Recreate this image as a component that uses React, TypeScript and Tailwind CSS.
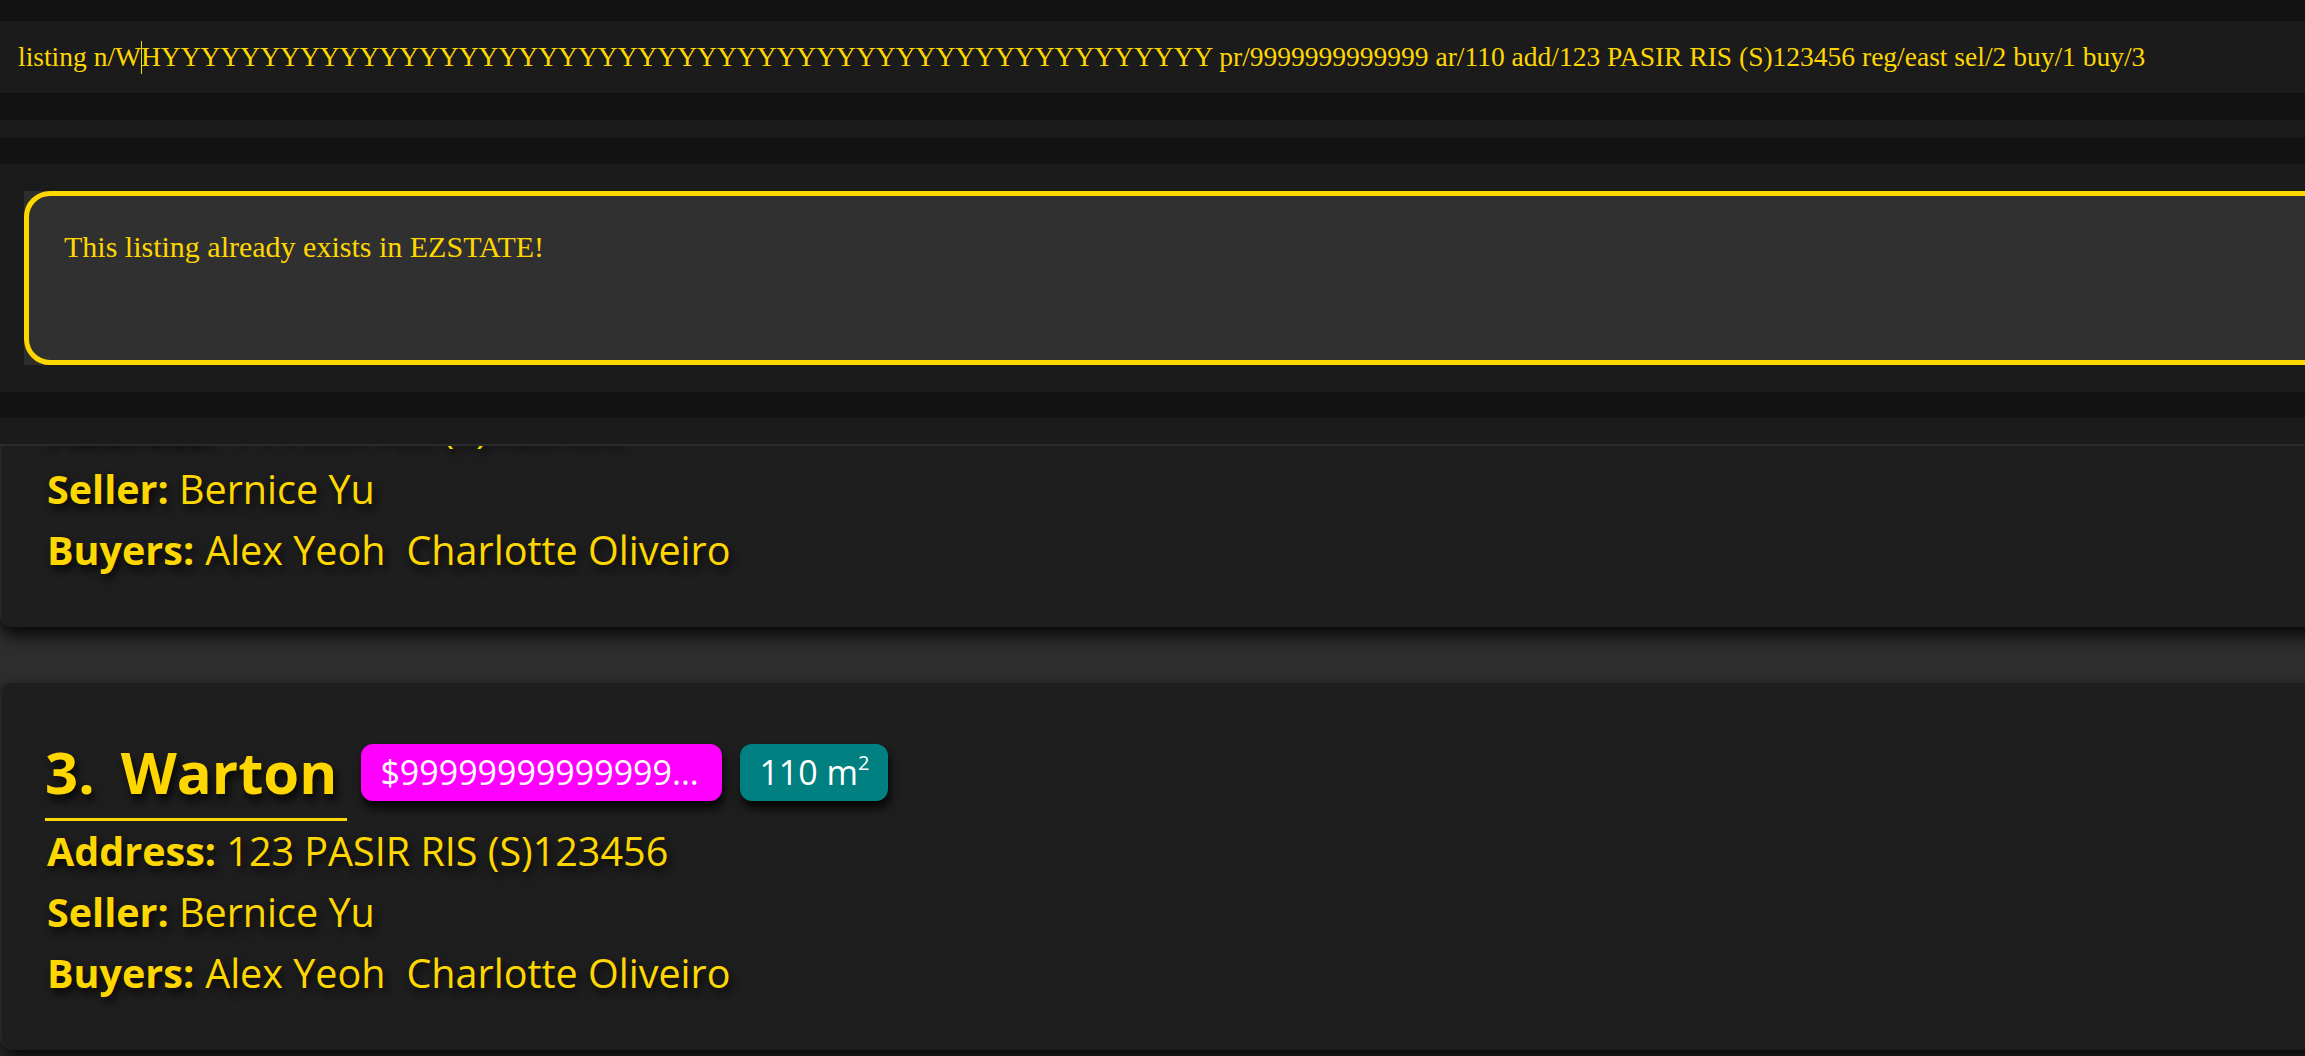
import React from "react";

interface Listing {
    index: number;
    name: string;
    price: string;
    area: number;
    address: string;
    seller: string;
    buyers: string[];
}

const listings: Listing[] = [
    {
        index: 2,
        name: "Warton",
        price: "$99999999999999...",
        area: 110,
        address: "1 PASIR RIS (S)123456",
        seller: "Bernice Yu",
        buyers: ["Alex Yeoh", "Charlotte Oliveiro"],
    },
    {
        index: 3,
        name: "Warton",
        price: "$99999999999999...",
        area: 110,
        address: "123 PASIR RIS (S)123456",
        seller: "Bernice Yu",
        buyers: ["Alex Yeoh", "Charlotte Oliveiro"],
    },
];

const command =
    "HYYYYYYYYYYYYYYYYYYYYYYYYYYYYYYYYYYYYYYYYYYYYYYYYYYYYY pr/9999999999999 ar/110 add/123 PASIR RIS (S)123456 reg/east sel/2 buy/1 buy/3";

function ListingCard({ listing }: { listing: Listing }) {
    return (
        <div className="-mr-[40px] rounded-[12px] border-l-2 border-[#262626] bg-[#1e1e1e] pl-[43px] pt-[60px] pb-[46px] shadow-[0_8px_18px_rgba(0,0,0,0.9)]">
            {/* Title row */}
            <div className="flex items-start">
                <div className="flex border-b-[3px] border-[#ffd700] pb-[17px] pr-[10px] text-[58px] font-bold leading-[58px] [text-shadow:3px_6px_8px_rgba(0,0,0,0.85)]">
                    <span>{listing.index}.</span>
                    <span className="ml-[26px]">{listing.name}</span>
                </div>
                <span className="ml-[14px] mt-px flex h-[57px] w-[361px] items-center overflow-hidden whitespace-nowrap rounded-[12px] bg-[#ff00ff] px-[19px] text-[34px] text-white shadow-[2px_7px_10px_rgba(0,0,0,0.85)]">
                    {listing.price}
                </span>
                <span className="ml-[18px] mt-px flex h-[57px] items-center rounded-[12px] bg-[#008080] px-[19px] text-[34px] text-white shadow-[2px_7px_10px_rgba(0,0,0,0.85)]">
                    {listing.area} m<sup className="text-[20px]">2</sup>
                </span>
            </div>

            {/* Details */}
            <div className="pl-[2px] text-[39.5px] leading-[61px] [text-shadow:3px_5px_8px_rgba(0,0,0,0.85)]">
                <p>
                    <span className="font-bold">Address:</span> {listing.address}
                </p>
                <p>
                    <span className="font-bold">Seller:</span> {listing.seller}
                </p>
                <p className="flex">
                    <span className="mr-[11px] font-bold">Buyers:</span>
                    {listing.buyers.map((b) => (
                        <span key={b} className="mr-[21px]">
                            {b}
                        </span>
                    ))}
                </p>
            </div>
        </div>
    );
}

export default function App() {
    return (
        <div className="flex h-screen w-full flex-col overflow-hidden bg-[#121212] font-['Open_Sans',sans-serif] text-[#ffd700]">
            <div className="h-[20px] shrink-0 bg-[#121212]" />

            {/* Command box */}
            <div className="flex h-[74px] shrink-0 items-center border-y border-[#0e0e0e] bg-[#1b1b1b] pl-[18px] font-['Liberation_Serif',serif] text-[27.5px] leading-[34px] whitespace-nowrap">
                <span>listing n/W</span>
                <span className="-mr-px inline-block h-[33px] w-px bg-[#ffd700]" />
                <span>{command}</span>
            </div>

            <div className="h-[26px] shrink-0 bg-[#121212]" />
            <div className="h-[18px] shrink-0 bg-[#1b1b1b]" />
            <div className="h-[26px] shrink-0 bg-[#121212]" />

            {/* Result display */}
            <div className="shrink-0 bg-[#1b1b1b] py-[27px] pl-[24px]">
                <div className="min-w-[2400px] bg-[#2d2d2d]">
                    <div className="h-[174px] rounded-[26px] border-[5px] border-[#ffd700] bg-[#303030] pl-[35px] pt-[33px] font-['Liberation_Serif',serif] text-[30px] leading-[36px]">
                        This listing already exists in EZSTATE!
                    </div>
                </div>
            </div>

            <div className="h-[26px] shrink-0 bg-[#121212]" />
            <div className="h-[26px] shrink-0 bg-[#1b1b1b]" />
            <div className="h-[2px] shrink-0 bg-[#2b2b2b]" />

            {/* Listing list */}
            <div className="flex-1 overflow-hidden bg-[#2e2e2e]">
                <div className="-mt-[186px] flex flex-col gap-[56px]">
                    {listings.map((l) => (
                        <ListingCard key={l.index} listing={l} />
                    ))}
                </div>
            </div>
        </div>
    );
}
